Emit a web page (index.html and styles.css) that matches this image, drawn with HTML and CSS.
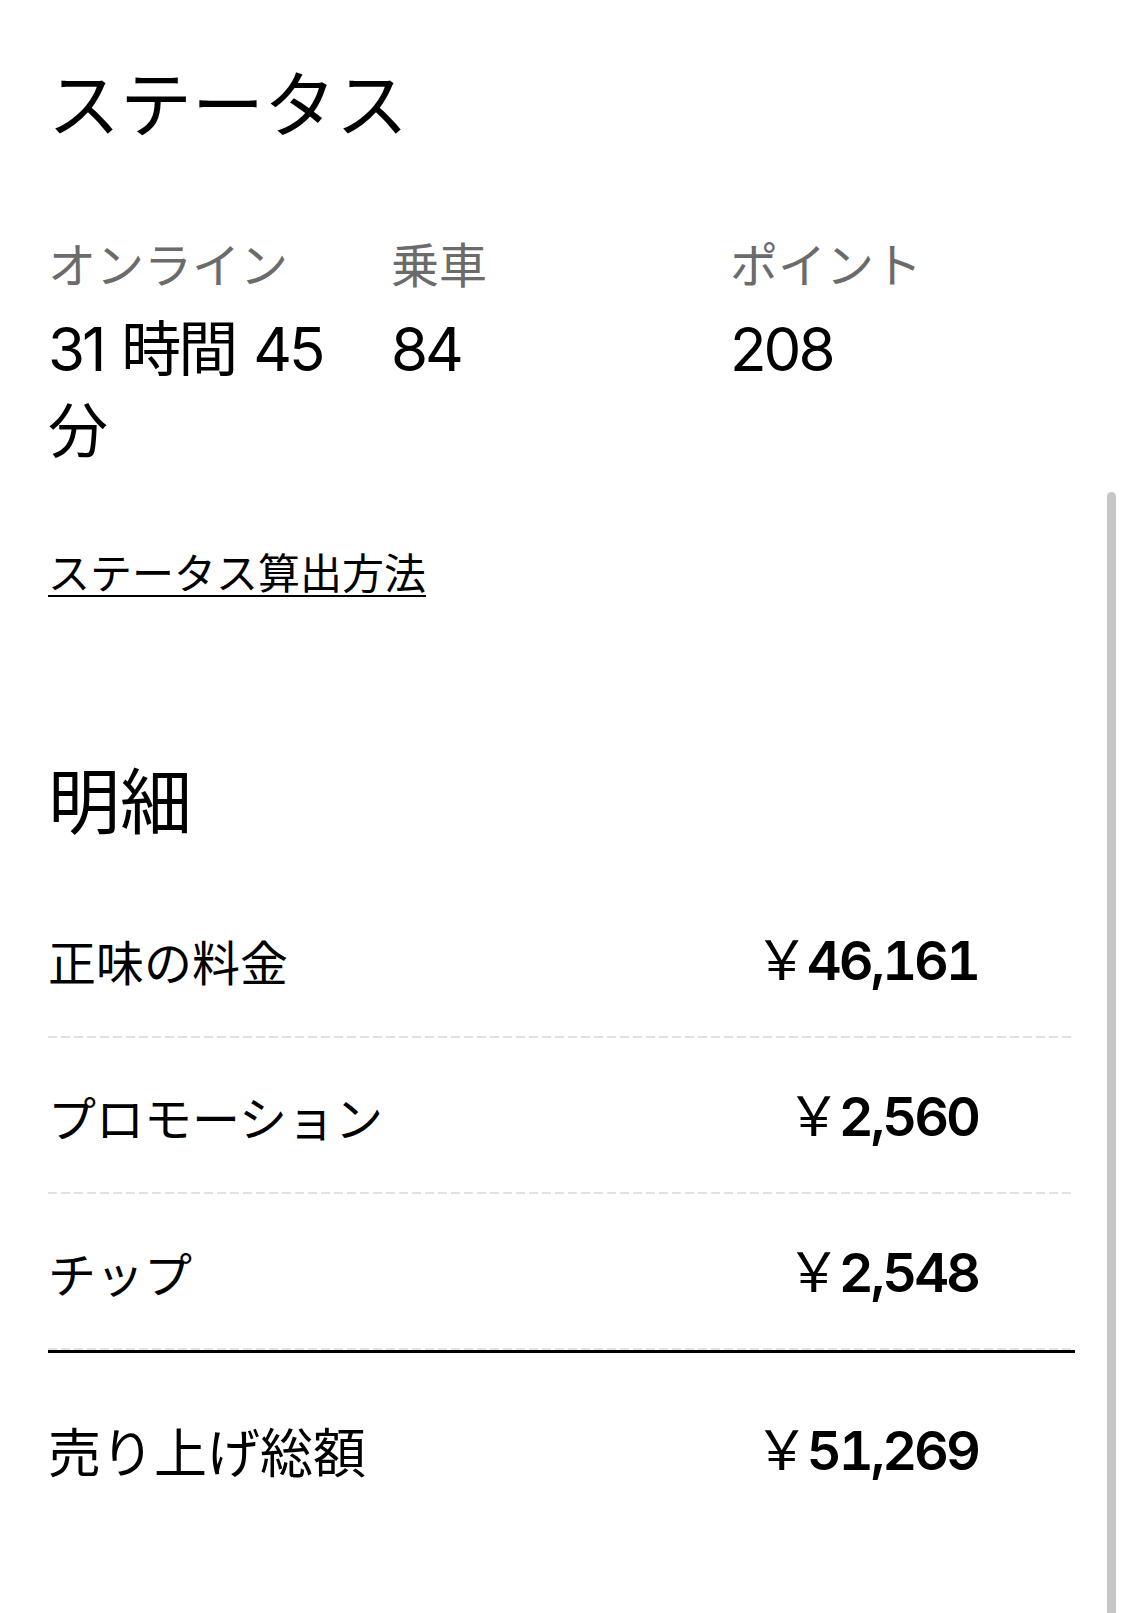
FILE: index.html
```html
<!DOCTYPE html>
<html lang="ja">
<head>
    <meta charset="UTF-8">
    <meta name="viewport" content="width=device-width, initial-scale=1.0">
    <title>ステータス</title>
    <link rel="stylesheet" href="styles.css">
</head>
<body>

    <div class="container">
        <h1 class="section-title">ステータス</h1>

        <div class="stats">
            <div class="stat">
                <div class="stat-label">オンライン</div>
                <div class="stat-value">31 時間 45 分</div>
            </div>
            <div class="stat">
                <div class="stat-label">乗車</div>
                <div class="stat-value">84</div>
            </div>
            <div class="stat">
                <div class="stat-label">ポイント</div>
                <div class="stat-value">208</div>
            </div>
        </div>

        <a class="info-link" href="#">ステータス算出方法</a>

        <h1 class="section-title details-title">明細</h1>

        <div class="breakdown">
            <div class="row">
                <span class="row-label">正味の料金</span>
                <span class="row-amount"><span class="yen">￥</span>46,161</span>
            </div>
            <div class="row">
                <span class="row-label">プロモーション</span>
                <span class="row-amount"><span class="yen">￥</span>2,560</span>
            </div>
            <div class="row">
                <span class="row-label">チップ</span>
                <span class="row-amount"><span class="yen">￥</span>2,548</span>
            </div>
            <div class="row total">
                <span class="row-label">売り上げ総額</span>
                <span class="row-amount"><span class="yen">￥</span>51,269</span>
            </div>
        </div>
    </div>

    <!-- スクロールバー -->
    <div class="scrollbar"></div>

</body>
</html>
```

FILE: styles.css
```css
body {
    font-family: Inter, "Noto Sans CJK JP", sans-serif;
    margin: 0;
    padding: 0;
    background-color: #fff;
    color: #000;
    overflow: hidden;
}
.container {
    padding: 60px 50px 0 48px;
}
.section-title {
    font-size: 72px;
    font-weight: 400;
    line-height: 90px;
    margin: 0;
}
.stats {
    display: grid;
    grid-template-columns: 343px 339px 1fr;
    margin-top: 86px;
}
.stat-label {
    font-size: 48px;
    line-height: 60px;
    color: #6b6b6b;
}
.stat-value {
    font-size: 60px;
    line-height: 82px;
    letter-spacing: -3px;
    word-spacing: 4px;
    margin-top: 12px;
}
.info-link {
    display: inline-block;
    margin-top: 75px;
    font-size: 42px;
    line-height: 54px;
    color: #000;
    text-decoration: underline;
    text-underline-offset: 6px;
    text-decoration-thickness: 2px;
}
.details-title {
    margin-top: 156px;
}
.breakdown {
    margin-top: 35px;
}
.row {
    display: flex;
    justify-content: space-between;
    align-items: center;
    height: 156px;
    background: repeating-linear-gradient(to right, #e2e2e2 0 9px, transparent 9px 13px) left bottom / 100% 2px no-repeat;
}
.row-label {
    font-size: 48px;
}
.row-amount {
    font-size: 54px;
    font-weight: 600;
    font-variant-numeric: tabular-nums;
    letter-spacing: -3px;
    padding: 0 97px 8px 0;
}
.yen {
    font-weight: 400;
    letter-spacing: -2px;
}
.row.total {
    background: none;
    border-top: 3px solid #000;
    height: 194px;
}
.row.total .row-label {
    font-size: 53px;
}
.scrollbar {
    position: absolute;
    top: 492px;
    right: 9px;
    bottom: 0;
    width: 9px;
    background-color: #c6c6c6;
    border-radius: 5px 5px 0 0;
}
```
